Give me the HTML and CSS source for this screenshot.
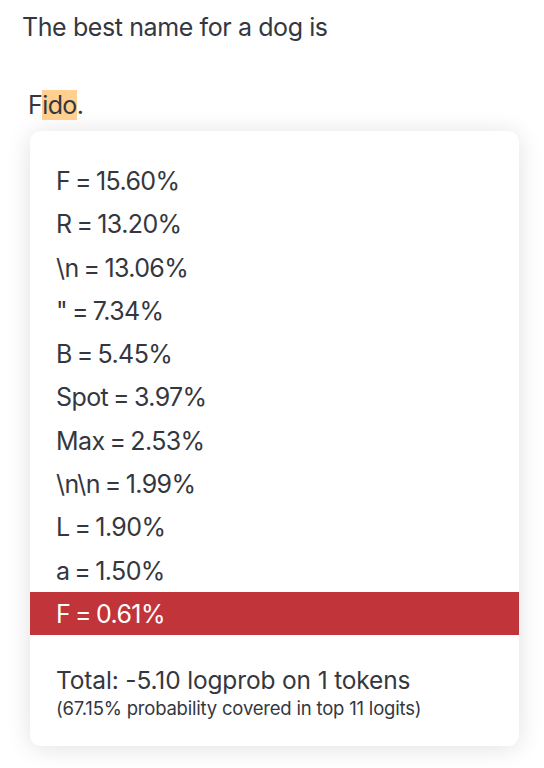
FILE: index.html
```html
<!DOCTYPE html>
<html>
<head>
<meta charset="utf-8">
<link rel="stylesheet" href="styles.css">
</head>
<body>
<div class="page">
  <p class="prompt">The best name for a dog is</p>
  <p class="completion">F<span class="hl">ido</span>.</p>
  <div class="card">
    <ul class="list">
      <li class="row">F = 15.60%</li>
      <li class="row">R = 13.20%</li>
      <li class="row">\n = 13.06%</li>
      <li class="row">" = 7.34%</li>
      <li class="row">B = 5.45%</li>
      <li class="row">Spot = 3.97%</li>
      <li class="row">Max = 2.53%</li>
      <li class="row">\n\n = 1.99%</li>
      <li class="row">L = 1.90%</li>
      <li class="row">a = 1.50%</li>
      <li class="row row-selected">F = 0.61%</li>
    </ul>
    <div class="total">
      <div class="total-main">Total: -5.10 logprob on 1 tokens</div>
      <div class="total-sub">(67.15% probability covered in top 11 logits)</div>
    </div>
  </div>
</div>
</body>
</html>
```
FILE: styles.css
```css
* { box-sizing: border-box; }
html, body { margin: 0; padding: 0; background: #ffffff; }
body {
  font-family: Inter, "Noto Sans", "Liberation Sans", sans-serif;
  color: #353740;
  width: 544px;
  height: 768px;
  overflow: hidden;
}
.page { padding: 10px 0 0 0; }
.prompt {
  margin: 0 0 0 22px;
  font-size: 25px;
  line-height: 35px;
  letter-spacing: -0.4px;
}
.completion {
  margin: 43px 0 0 28px;
  font-size: 25px;
  line-height: 35px;
  letter-spacing: -0.6px;
}
.hl { background: #ffd08f; }
.card {
  margin: 8px 0 0 30px;
  width: 489px;
  background: #fff;
  border-radius: 11px;
  box-shadow: 0 2px 24px rgba(0, 0, 0, 0.12);
  padding: 28px 0 26px 0;
}
.list { list-style: none; margin: 0; padding: 0; }
.row {
  height: 43.3px;
  line-height: 43.3px;
  padding: 1px 0 0 26px;
  font-size: 25px;
  letter-spacing: -0.6px;
  word-spacing: -1.5px;
}
.row-selected { background: #c1343a; color: #fff; }
.total { padding: 30px 0 0 26px; }
.total-main { font-size: 24.5px; line-height: 31px; letter-spacing: -0.15px; }
.total-sub { font-size: 18.5px; line-height: 24px; letter-spacing: -0.2px; }
```
